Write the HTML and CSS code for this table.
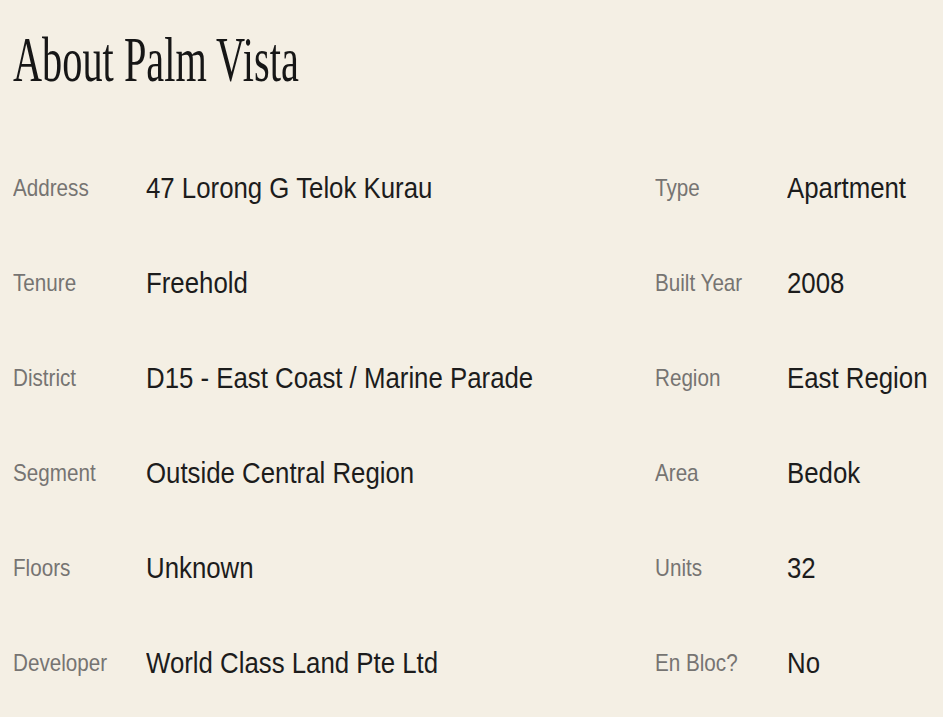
FILE: index.html
```html
<!DOCTYPE html>
<html lang="en">
<head>
  <meta charset="UTF-8" />
  <meta name="viewport" content="width=device-width, initial-scale=1.0"/>
  <title>About Palm Vista</title>
  <link rel="stylesheet" href="styles.css">
</head>
<body>
  <section class="about">
    <h1 class="about-title">About Palm Vista</h1>

    <!-- Property facts -->
    <div class="facts">
      <span class="label">Address</span>
      <span class="value">47 Lorong G Telok Kurau</span>
      <span class="label">Type</span>
      <span class="value">Apartment</span>

      <span class="label">Tenure</span>
      <span class="value">Freehold</span>
      <span class="label">Built Year</span>
      <span class="value">2008</span>

      <span class="label">District</span>
      <span class="value">D15 - East Coast / Marine Parade</span>
      <span class="label">Region</span>
      <span class="value">East Region</span>

      <span class="label">Segment</span>
      <span class="value">Outside Central Region</span>
      <span class="label">Area</span>
      <span class="value">Bedok</span>

      <span class="label">Floors</span>
      <span class="value">Unknown</span>
      <span class="label">Units</span>
      <span class="value">32</span>

      <span class="label">Developer</span>
      <span class="value">World Class Land Pte Ltd</span>
      <span class="label">En Bloc?</span>
      <span class="value">No</span>
    </div>
  </section>
</body>
</html>
```

FILE: styles.css
```css
body {
  margin: 0;
  background: #f4efe4;
  font-family: "Liberation Sans", Arial, sans-serif;
  color: #1c1c1c;
  overflow: hidden;
}
.about {
  padding: 29px 0 0 13px;
}
.about-title {
  margin: 0;
  font-family: "Liberation Serif", "Times New Roman", serif;
  font-weight: normal;
  font-size: 63px;
  line-height: 63px;
  color: #161616;
  white-space: nowrap;
  transform: scaleX(0.64);
  transform-origin: left center;
}
.facts {
  margin-top: 48px;
  display: grid;
  grid-template-columns: 133px 509px 132px 143px;
  grid-auto-rows: 95px;
  align-items: center;
}
/* the typeface in the design runs narrow */
.label,
.value {
  white-space: nowrap;
  transform: scaleX(0.86);
  transform-origin: left center;
}
.label {
  font-size: 24px;
  line-height: 28px;
  color: #767472;
}
.value {
  font-size: 30px;
  line-height: 34px;
  color: #1c1c1c;
}
```
